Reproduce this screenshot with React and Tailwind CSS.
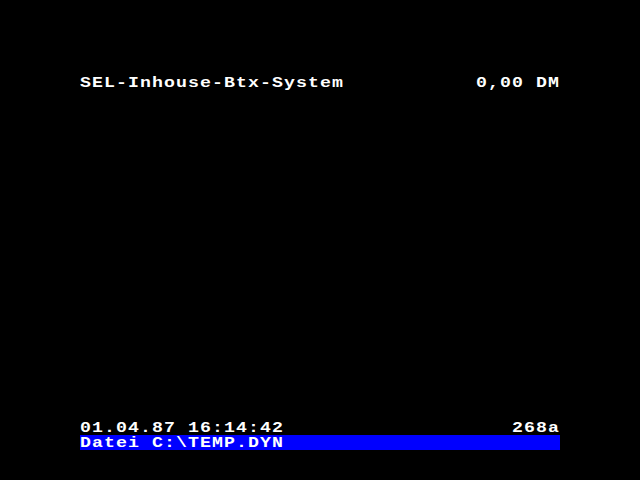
import React from "react";

function Cells({ text }) {
  return (
    <span className="flex">
      {text.split("").map((c, i) => (
        <span key={i} className="inline-block w-[12px] text-left">
          <span className="inline-block origin-left scale-x-[1.3]">{c === " " ? "\u00a0" : c}</span>
        </span>
      ))}
    </span>
  );
}

export default function App() {
  return (
    <div
      className="w-[640px] h-[480px] bg-black text-white flex flex-col px-[80px] pt-[75px] pb-[30px] font-bold text-[14px] leading-[15px]"
      style={{ fontFamily: '"Liberation Mono", monospace' }}
    >
      <div className="h-[15px] pt-px flex justify-between">
        <Cells text="SEL-Inhouse-Btx-System" />
        <Cells text="0,00 DM" />
      </div>
      <div className="flex-1" />
      <div className="h-[15px] pt-px flex justify-between">
        <Cells text="01.04.87 16:14:42" />
        <Cells text="268a" />
      </div>
      <div className="h-[15px] pt-px flex bg-[#0000ff]">
        <Cells text="Datei C:\TEMP.DYN" />
      </div>
    </div>
  );
}
